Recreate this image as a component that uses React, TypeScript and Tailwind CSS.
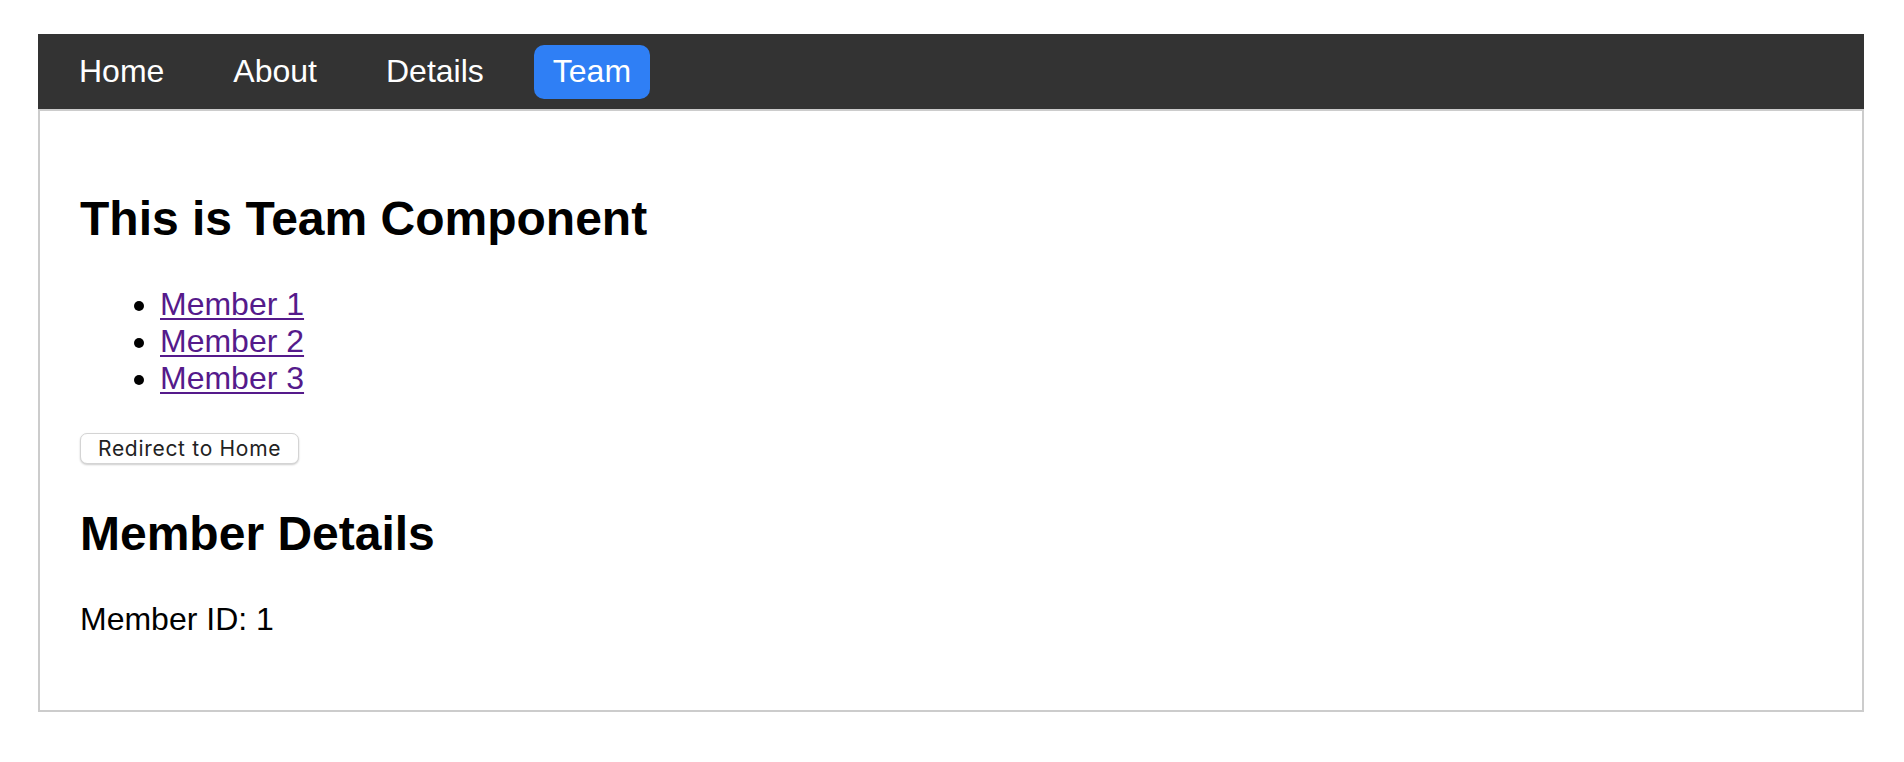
import React from "react";

const navItems = ["Home", "About", "Details", "Team"];
const members = ["Member 1", "Member 2", "Member 3"];

const App: React.FC = () => {
  const active = "Team";

  return (
    <div className="min-h-[762px] bg-white pt-[34px] pl-[38px] pr-[40px] font-['Liberation_Sans',Arial,sans-serif] text-black">
      {/* Top navigation */}
      <nav className="flex h-[75px] items-center gap-[31px] bg-[#333333] pl-[22px]">
        {navItems.map((item) => (
          <a
            key={item}
            href="#"
            className={`flex h-[54px] items-center rounded-[10px] px-[19px] text-[32px] leading-[normal] text-white ${
              item === active ? "bg-[#2f7ff5]" : ""
            }`}
          >
            {item}
          </a>
        ))}
      </nav>

      {/* Page content */}
      <div className="border-2 border-[#cccccc] px-[40px] py-[40px]">
        <h2 className="mt-[40px] text-[48px] font-bold leading-[normal]">This is Team Component</h2>

        <ul className="mt-[40px] list-disc pl-[80px] text-[32px] leading-[normal]">
          {members.map((m) => (
            <li key={m}>
              <a href="#" className="text-[#551a8b] underline decoration-2 underline-offset-[3px]">
                {m}
              </a>
            </li>
          ))}
        </ul>

        <button className="mt-[36px] flex h-[31px] items-center rounded-[7px] border border-[#d4d4d4] bg-white px-[17px] font-['Inter',sans-serif] text-[21px] leading-none tracking-[0.7px] text-[#222222] shadow-[0_1px_2px_rgba(0,0,0,0.2)]">
          Redirect to Home
        </button>

        <h2 className="mt-[42px] text-[48px] font-bold leading-[normal]">Member Details</h2>

        <p className="mt-[40px] mb-[32px] text-[32px] leading-[normal]">Member ID: 1</p>
      </div>
    </div>
  );
};

export default App;
